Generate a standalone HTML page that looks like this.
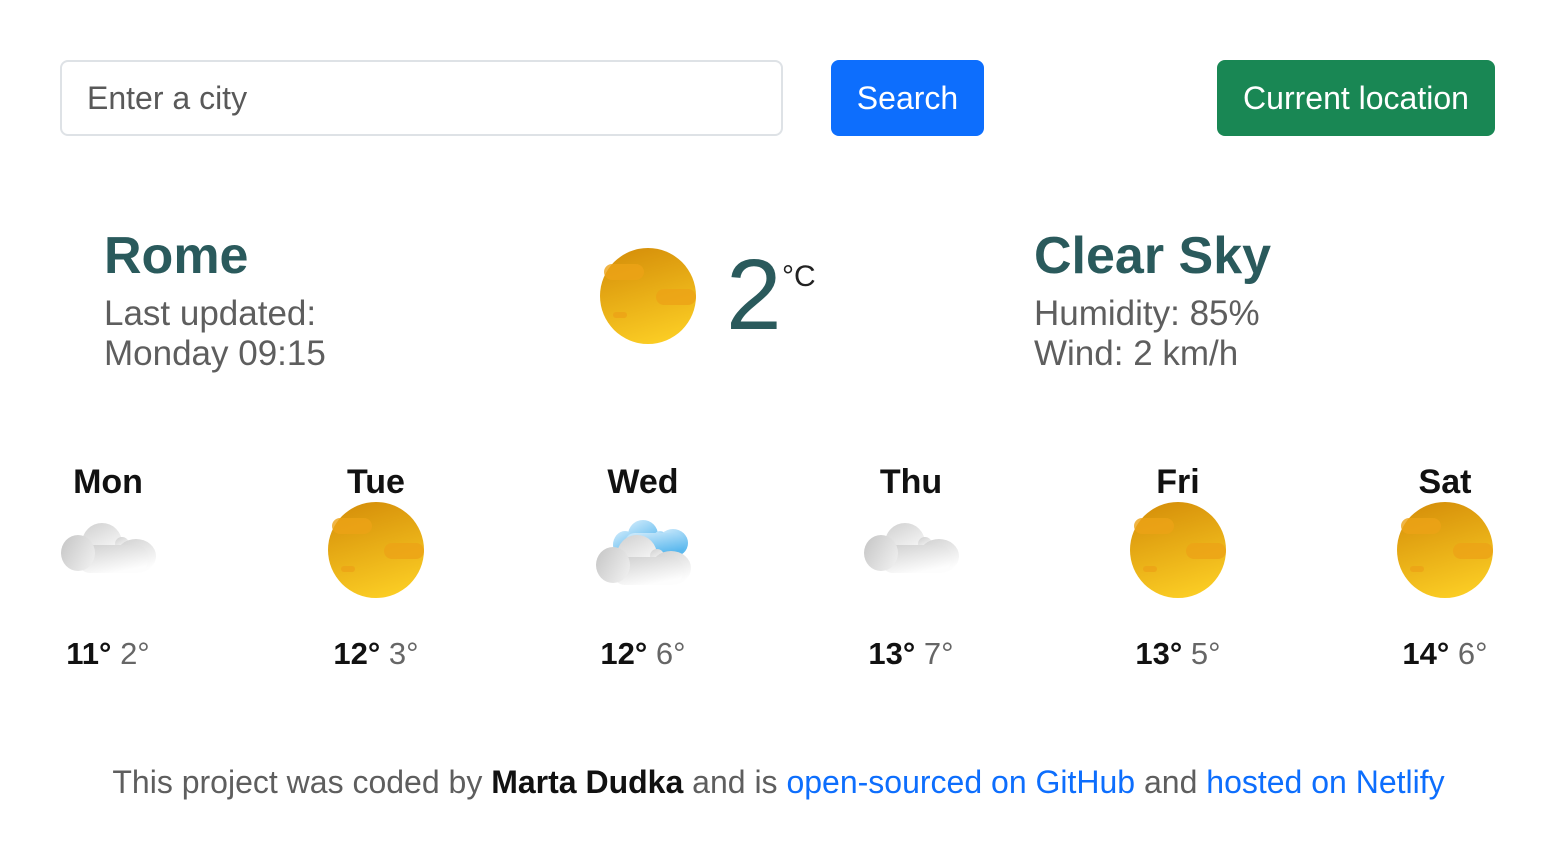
<!DOCTYPE html>
<html><head><meta charset="utf-8"><style>
body{margin:0;width:1557px;height:848px;background:#fff;font-family:"Liberation Sans",sans-serif;position:relative;overflow:hidden}
.a{position:absolute;white-space:nowrap}
input{position:absolute;left:60px;top:60px;width:723px;height:76px;box-sizing:border-box;border:2px solid #dee2e6;border-radius:8px;padding:0 25px;font:32px "Liberation Sans",sans-serif;color:#555}
input::placeholder{color:#595959}
.btn{position:absolute;top:60px;height:76px;border-radius:8px;color:#fff;font-size:32px;line-height:76px;text-align:center}
.h{color:#2a5a5c;font-weight:bold;font-size:52px}
.g{color:#5e5e5e;font-size:35px;line-height:40px}
.day{position:absolute;width:200px;text-align:center;font-weight:bold;font-size:34px;color:#111;top:463px}
.t{position:absolute;width:200px;text-align:center;font-size:31px;color:#666;top:636px}
.t b{color:#111}
.ic{position:absolute;width:96px;height:96px}
a{color:#0d6efd;text-decoration:none}
</style></head><body>
<svg width="0" height="0" style="position:absolute"><defs>
<linearGradient id="sg" x1="0.3" y1="0" x2="0.6" y2="1"><stop offset="0" stop-color="#d6900a"/><stop offset="1" stop-color="#fbcd24"/></linearGradient>
<linearGradient id="cg" x1="0" y1="0" x2="0.5" y2="1"><stop offset="0" stop-color="#cfcfcf"/><stop offset="1" stop-color="#fdfdfd"/></linearGradient>
<linearGradient id="cg2" x1="0" y1="0" x2="1" y2="0.6"><stop offset="0" stop-color="#c4c4c4"/><stop offset="1" stop-color="#ececec"/></linearGradient>
<linearGradient id="bg" x1="0" y1="0" x2="0.5" y2="1"><stop offset="0" stop-color="#d2ecfc"/><stop offset="1" stop-color="#5ab8ee"/></linearGradient>
<symbol id="sun" viewBox="0 0 96 96"><circle cx="48" cy="48" r="48" fill="url(#sg)"/><rect x="4" y="16" width="40" height="16" rx="8" fill="#eca216" opacity=".8"/><rect x="56" y="41" width="40" height="16" rx="8" fill="#eca216" opacity=".8"/><rect x="13" y="64" width="14" height="6" rx="3" fill="#eca216" opacity=".8"/></symbol>
<symbol id="cloud" viewBox="0 0 96 96"><g fill="url(#cg)"><circle cx="42" cy="42" r="20"/><circle cx="62" cy="43" r="7"/><ellipse cx="76" cy="55" rx="20" ry="17"/><rect x="18" y="44" width="70" height="28" rx="12"/></g><ellipse cx="18" cy="52" rx="17" ry="18" fill="url(#cg2)"/></symbol>
</defs></svg>
<input placeholder="Enter a city">
<div class="btn" style="left:831px;width:153px;background:#0d6efd">Search</div>
<div class="btn" style="left:1217px;width:278px;background:#198754">Current location</div>

<div class="a h" style="left:104px;top:226px">Rome</div>
<div class="a g" style="left:104px;top:294px">Last updated:<br>Monday 09:15</div>
<svg class="ic" style="left:600px;top:248px" viewBox="0 0 96 96"><use href="#sun" width="96" height="96"/></svg>
<div class="a" style="left:726px;top:238px;font-size:100px;color:#2a5a5c">2</div>
<div class="a" style="left:782px;top:260px;font-size:30px;color:#222">°C</div>
<div class="a h" style="left:1034px;top:226px">Clear Sky</div>
<div class="a g" style="left:1034px;top:294px">Humidity: 85%<br>Wind: 2 km/h</div>

<div class="day" style="left:8px">Mon</div>
<div class="day" style="left:276px">Tue</div>
<div class="day" style="left:543px">Wed</div>
<div class="day" style="left:811px">Thu</div>
<div class="day" style="left:1078px">Fri</div>
<div class="day" style="left:1345px">Sat</div>

<svg class="ic" style="left:60px;top:501px" viewBox="0 0 96 96"><use href="#cloud" width="96" height="96"/></svg>
<svg class="ic" style="left:328px;top:502px" viewBox="0 0 96 96"><use href="#sun" width="96" height="96"/></svg>
<svg class="ic" style="left:595px;top:503px" viewBox="0 0 96 96"><g fill="url(#bg)"><circle cx="48" cy="32" r="15"/><circle cx="65" cy="34" r="6"/><ellipse cx="78" cy="40" rx="15" ry="14"/><ellipse cx="30" cy="42" rx="12" ry="14"/><rect x="30" y="30" width="60" height="22" rx="10"/></g><use href="#cloud" x="0" y="10" width="96" height="96"/></svg>
<svg class="ic" style="left:863px;top:501px" viewBox="0 0 96 96"><use href="#cloud" width="96" height="96"/></svg>
<svg class="ic" style="left:1130px;top:502px" viewBox="0 0 96 96"><use href="#sun" width="96" height="96"/></svg>
<svg class="ic" style="left:1397px;top:502px" viewBox="0 0 96 96"><use href="#sun" width="96" height="96"/></svg>

<div class="t" style="left:8px"><b>11°</b> 2°</div>
<div class="t" style="left:276px"><b>12°</b> 3°</div>
<div class="t" style="left:543px"><b>12°</b> 6°</div>
<div class="t" style="left:811px"><b>13°</b> 7°</div>
<div class="t" style="left:1078px"><b>13°</b> 5°</div>
<div class="t" style="left:1345px"><b>14°</b> 6°</div>

<div class="a" style="left:0;width:1557px;text-align:center;top:764px;font-size:32px;color:#5e5e5e">This project was coded by <b style="color:#111">Marta Dudka</b> and is <a>open-sourced on GitHub</a> and <a>hosted on Netlify</a></div>
</body></html>
